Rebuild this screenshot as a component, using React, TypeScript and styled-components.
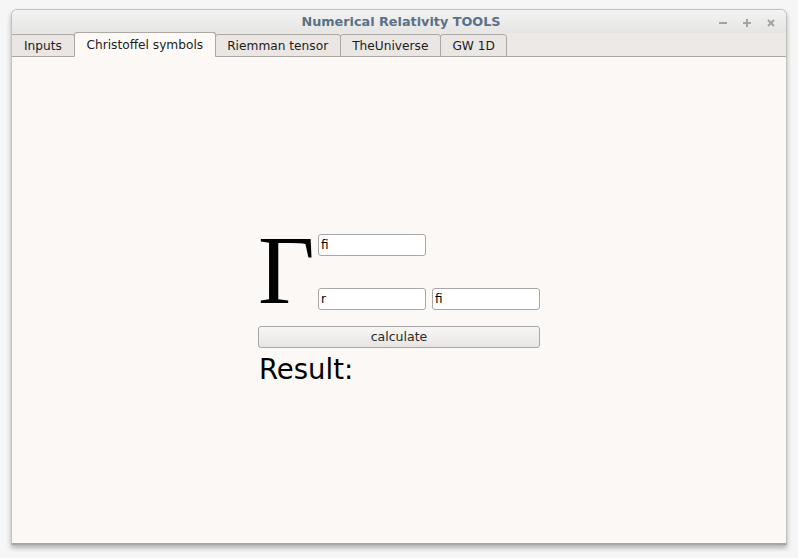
import styled, { createGlobalStyle } from "styled-components";

const Global = createGlobalStyle`
	html, body {
		margin: 0;
		padding: 0;
		background: #f6f6f6;
		font-family: "DejaVu Sans", "Liberation Sans", sans-serif;
	}
`;

const Desk = styled.div`
	width: 798px;
	height: 558px;
	padding: 9px 11px 0 11px;
	box-sizing: border-box;
`;

const Window = styled.div`
	width: 776px;
	height: 536px;
	display: flex;
	flex-direction: column;
	border: 1px solid #c2c0bd;
	border-bottom: 2px solid #a9a6a2;
	border-radius: 6px 6px 0 0;
	box-sizing: border-box;
	background: #edeae6;
	box-shadow: 0 3px 5px rgba(0, 0, 0, 0.28);
	overflow: hidden;
`;

const TitleBar = styled.div`
	height: 23px;
	flex: none;
	display: flex;
	align-items: center;
	justify-content: center;
	position: relative;
	background: linear-gradient(#f3f3f3, #e5e5e4);
`;

const Title = styled.span`
	font-size: 12.8px;
	font-weight: bold;
	color: #5a7186;
	margin-left: 4px;
`;

const Controls = styled.div`
	position: absolute;
	right: 8px;
	top: 0;
	bottom: 0;
	display: flex;
	align-items: center;
	gap: 10px;
`;

const TabBar = styled.div`
	height: 24px;
	flex: none;
	display: flex;
	align-items: flex-end;
	position: relative;
	z-index: 1;
	margin-bottom: -1px;
`;

const Tab = styled.div<{ $active?: boolean }>`
	height: ${(p) => (p.$active ? 25 : 23)}px;
	padding: 0 11.5px;
	padding-top: ${(p) => (p.$active ? 0 : 1)}px;
	display: flex;
	align-items: center;
	box-sizing: border-box;
	font-size: 12.2px;
	color: #1c1c1c;
	border: 1px solid #aba7a3;
	border-bottom: ${(p) => (p.$active ? "1px solid #fcf8f5" : "1px solid #aba7a3")};
	border-radius: 3px 3px 0 0;
	margin-left: -1px;
	background: ${(p) => (p.$active ? "#fcf9f6" : "#e9e6e3")};
	&:first-child {
		margin-left: 0;
		padding: 1px 12px 0 12px;
		border-left: none;
		border-radius: 0 3px 0 0;
	}
`;

const Content = styled.div`
	flex: 1;
	background: #fcf8f5;
	border-top: 1px solid #aba7a3;
	display: flex;
	align-items: center;
	justify-content: center;
	padding-top: 18px;
`;

const Form = styled.div`
	width: 282px;
	display: flex;
	flex-direction: column;
`;

const SymbolRow = styled.div`
	display: grid;
	grid-template-columns: 60px 108px 114px;
	grid-template-rows: 22px 22px;
	row-gap: 32px;
`;

const Gamma = styled.div`
	grid-row: 1 / span 2;
	font-family: "Liberation Serif", "DejaVu Serif", serif;
	font-size: 98px;
	line-height: 76px;
	color: #000;
	margin-top: -2px;
`;

const Field = styled.input<{ $col: number; $row: number }>`
	grid-column: ${(p) => p.$col};
	grid-row: ${(p) => p.$row};
	justify-self: end;
	width: 108px;
	height: 22px;
	box-sizing: border-box;
	border: 1px solid #a9a6a3;
	border-radius: 3px;
	background: #fff;
	font-family: "DejaVu Sans", sans-serif;
	font-size: 12px;
	color: #000;
	padding: 0 2px;
	outline: none;
`;

const Button = styled.button`
	margin-top: 16px;
	height: 22px;
	width: 282px;
	border: 1px solid #a9a6a3;
	border-radius: 3px;
	background: linear-gradient(#f7f6f5, #e8e6e4);
	font-family: "DejaVu Sans", sans-serif;
	font-size: 12.5px;
	color: #2a2a2a;
	padding: 0;
`;

const Result = styled.div`
	margin-top: 5px;
	margin-left: 1px;
	font-size: 27.5px;
	line-height: 32px;
	color: #000;
`;

function Ctl({ kind }: { kind: "min" | "max" | "close" }) {
	return (
		<svg width="14" height="14" viewBox="0 0 14 14">
			<g stroke="#a3a3a3" strokeWidth="2" strokeLinecap="butt">
				{kind === "min" && <line x1="3" y1="8" x2="11" y2="8" />}
				{kind === "max" && (
					<>
						<line x1="3" y1="8" x2="11" y2="8" />
						<line x1="7" y1="4" x2="7" y2="12" />
					</>
				)}
				{kind === "close" && (
					<>
						<line x1="4" y1="5" x2="10" y2="11" />
						<line x1="10" y1="5" x2="4" y2="11" />
					</>
				)}
			</g>
		</svg>
	);
}

export default function App() {
	return (
		<>
			<Global />
			<Desk>
				<Window>
					<TitleBar>
						<Title>Numerical Relativity TOOLS</Title>
						<Controls>
							<Ctl kind="min" />
							<Ctl kind="max" />
							<Ctl kind="close" />
						</Controls>
					</TitleBar>
					<TabBar>
						<Tab>Inputs</Tab>
						<Tab $active>Christoffel symbols</Tab>
						<Tab>Riemman tensor</Tab>
						<Tab>TheUniverse</Tab>
						<Tab>GW 1D</Tab>
					</TabBar>
					<Content>
						<Form>
							<SymbolRow>
								<Gamma>Γ</Gamma>
								<Field $col={2} $row={1} defaultValue="fi" />
								<Field $col={2} $row={2} defaultValue="r" />
								<Field $col={3} $row={2} defaultValue="fi" />
							</SymbolRow>
							<Button>calculate</Button>
							<Result>Result:</Result>
						</Form>
					</Content>
				</Window>
			</Desk>
		</>
	);
}
